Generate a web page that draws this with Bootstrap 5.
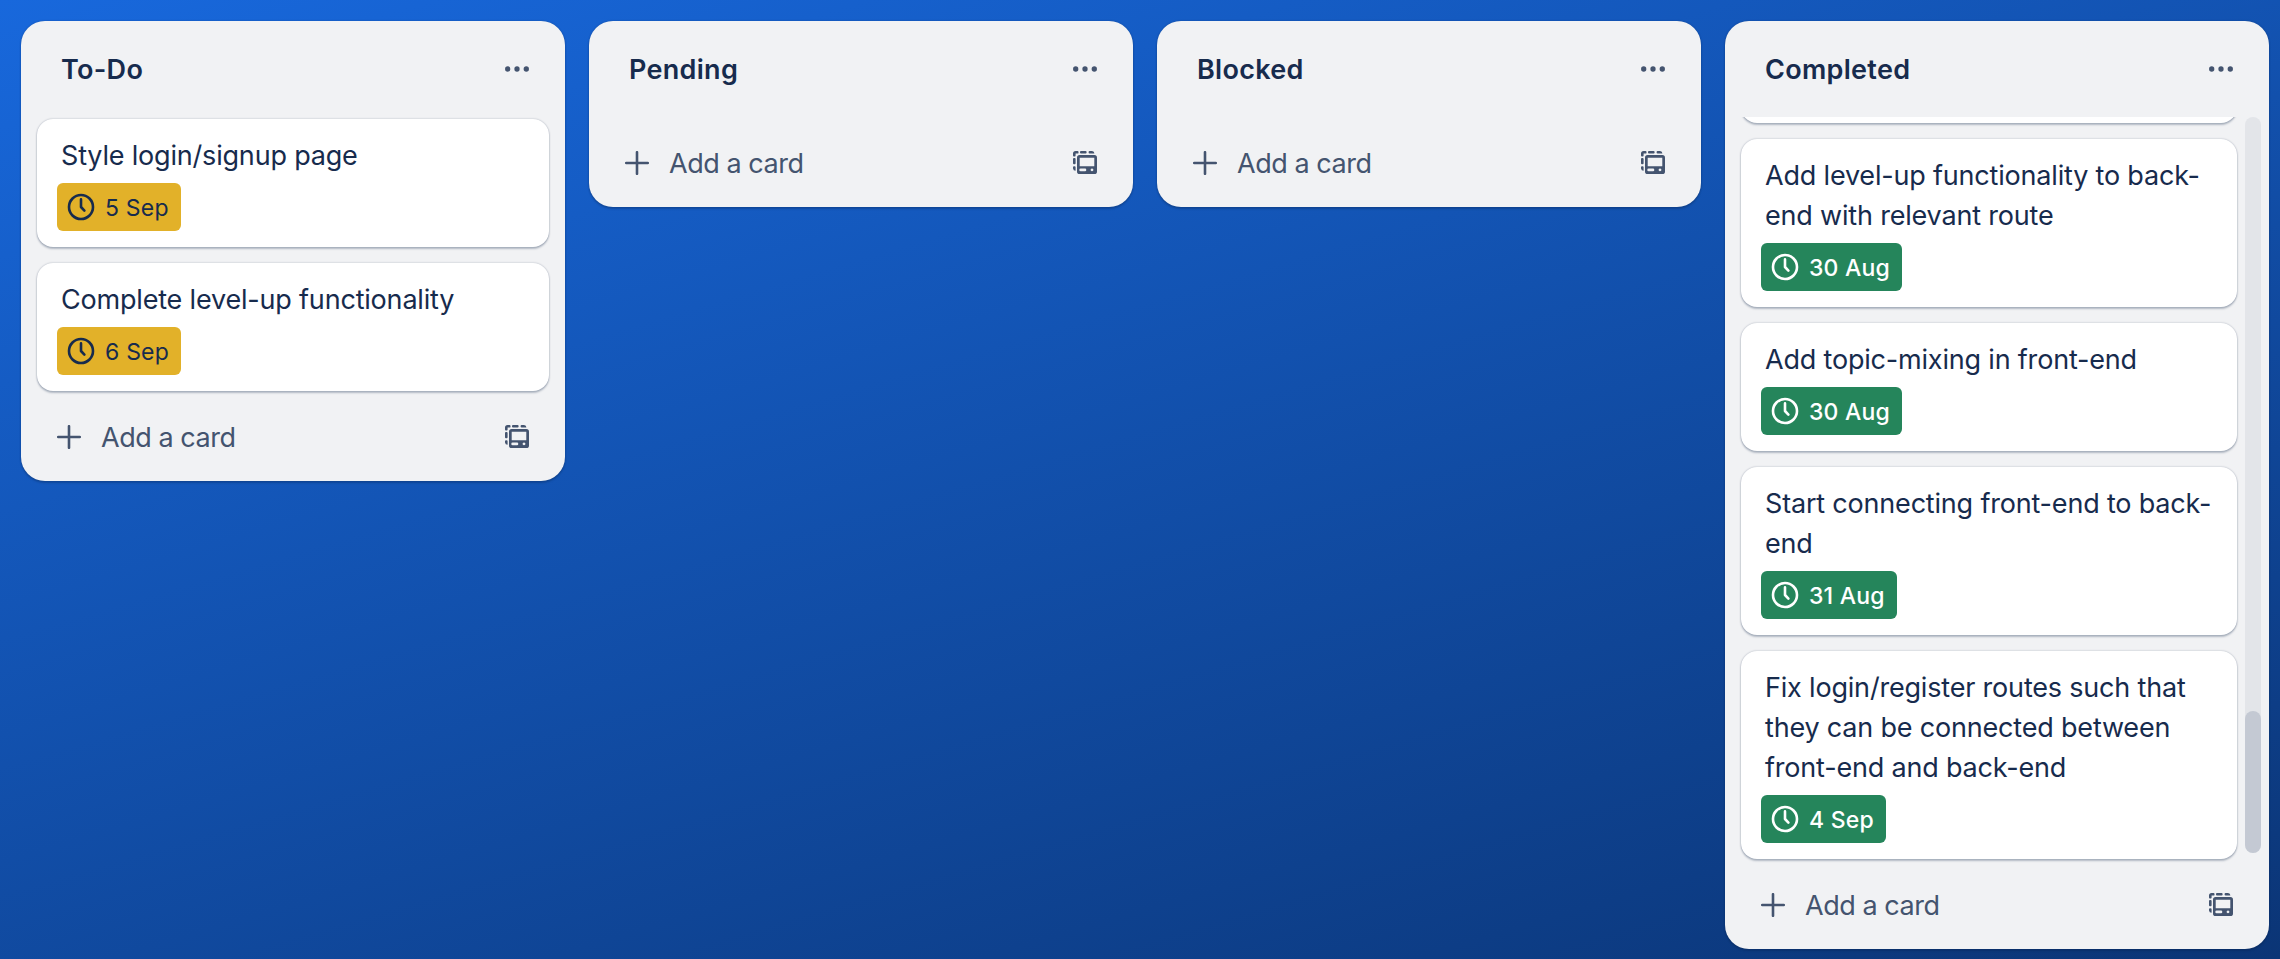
<!DOCTYPE html>
<html lang="en">
<head>
<meta charset="utf-8">
<meta name="viewport" content="width=device-width, initial-scale=1">
<title>Board</title>
<link href="https://cdn.jsdelivr.net/npm/bootstrap@5.3.0/dist/css/bootstrap.min.css" rel="stylesheet">
<style>
  :root { --ink: #172b4d; --subtle: #44546f; --surface: #f1f2f4; }
  body {
    height: 100vh; overflow: hidden; color: var(--ink);
    font-family: Inter, "Liberation Sans", sans-serif; font-size: 27px; line-height: 40px;
    letter-spacing: -.19px;
    background: linear-gradient(163.6deg, #1868dc, #0b3576);
  }
  .board { padding: 21px; gap: 24px; }
  .board-list {
    width: 544px; background: var(--surface); border-radius: 24px;
    box-shadow: 0 2px 2px #091e4240, 0 0 2px #091e424f;
  }
  .list-head { height: 96px; padding: 0 36px 0 40px; }
  .list-head h2 { font-size: 27px; line-height: 40px; font-weight: 600; letter-spacing: .3px; padding-top: 2px; }
  .list-items { padding: 0 16px 8px; gap: 16px; }
  .list-items.has-cards { padding-top: 2px; }
  .scroll-cards { gap: 16px; padding: 0 8px 8px 16px; height: 750px; width: 520px; }
  .task {
    flex: none; background: #fff; border-radius: 16px; padding: 17px 24px 16px;
    box-shadow: 0 2px 2px #091e4240, 0 0 2px #091e424f;
  }
  .due {
    height: 48px; margin: 7px 0 0 -4px; padding: 0 12px 0 10px; gap: 10px;
    border-radius: 6px; font-size: 23px; letter-spacing: .2px; background: #e2b129;
  }
  .due span { padding-top: 1px; }
  .due.done { background: #25855b; color: #fff; font-weight: 500; letter-spacing: .2px; }
  .scroll-track { width: 16px; height: 736px; border-radius: 8px; background: #e3e5e9; }
  .scroll-thumb { height: 142px; border-radius: 8px; background: #c4c9d3; }
  .list-foot { height: 82px; padding: 0 36px 6px; color: var(--subtle); letter-spacing: -.45px; }
  .list-foot .add { gap: 20px; }
  .list-foot .add span { padding-top: 1px; }
  svg { display: block; flex: none; }
</style>
</head>
<body>
<svg width="0" height="0" class="position-absolute" aria-hidden="true">
  <symbol id="dots" viewBox="0 0 24 8"><g fill="#44546f"><circle cx="2.7" cy="4" r="2.65"/><circle cx="12" cy="4" r="2.65"/><circle cx="21.3" cy="4" r="2.65"/></g></symbol>
  <symbol id="plus" viewBox="0 0 24 24"><path d="M12 1.2v21.6M1.2 12h21.6" fill="none" stroke="#44546f" stroke-width="2.6" stroke-linecap="round"/></symbol>
  <symbol id="clock" viewBox="0 0 28 28"><circle cx="14" cy="14" r="12" fill="none" stroke="currentColor" stroke-width="2.6"/><path d="M14 6.4V14l3.4 3.6" fill="none" stroke="currentColor" stroke-width="2.6" stroke-linecap="round" stroke-linejoin="round"/></symbol>
  <symbol id="template" viewBox="0 0 24 24">
    <path fill="#44546f" d="M2.6 0H4.6a.9.9 0 0 1 .9.9v.8a.9.9 0 0 1-.9.9H2.6V4.6a.9.9 0 0 1-.9.9H.9A.9.9 0 0 1 0 4.600V2.600A2.600 2.600 0 0 1 2.600 0zM8 0h4.600a1 1 0 0 1 1 1v.6a1 1 0 0 1-1 1H8a1 1 0 0 1-1-1V1a1 1 0 0 1 1-1zM16.600 0H19a2.600 2.600 0 0 1 2.400 2.600h-4.800a1 1 0 0 1-1-1V1a1 1 0 0 1 1-1zM1 7h.6a1 1 0 0 1 1 1v4.300a1 1 0 0 1-1 1H1a1 1 0 0 1-1-1V8a1 1 0 0 1 1-1zM1 15.300h.6a1 1 0 0 1 1 1v3.400A2.600 2.600 0 0 1 0 17.500v-1.200a1 1 0 0 1 1-1z"/>
    <path fill="#44546f" fill-rule="evenodd" d="M6.600 4.100H21.400A2.600 2.600 0 0 1 24 6.700V20.400A2.600 2.600 0 0 1 21.400 23H6.600A2.600 2.600 0 0 1 4 20.400V6.700A2.600 2.600 0 0 1 6.600 4.100zM6.700 6.700V15.200H21.300V6.700zM7.600 17.600a1.300 1.300 0 0 0 0 2.600H12a1.300 1.300 0 0 0 0-2.600zM19 17.500a1.400 1.400 0 1 0 .01 0z"/>
  </symbol>
</svg>

<main class="board d-flex align-items-start">
  <section class="board-list d-flex flex-column flex-shrink-0">
    <header class="list-head d-flex align-items-center justify-content-between"><h2 class="mb-0">To-Do</h2><svg width="24" height="8"><use href="#dots"/></svg></header>
    <div class="list-items has-cards d-flex flex-column">
      <article class="task"><div>Style login/signup page</div><div class="due d-inline-flex align-items-center align-top"><svg width="28" height="28"><use href="#clock"/></svg><span>5 Sep</span></div></article>
      <article class="task"><div>Complete level-up functionality</div><div class="due d-inline-flex align-items-center align-top"><svg width="28" height="28"><use href="#clock"/></svg><span>6 Sep</span></div></article>
    </div>
    <footer class="list-foot d-flex align-items-center justify-content-between"><div class="add d-flex align-items-center"><svg width="24" height="24"><use href="#plus"/></svg><span>Add a card</span></div><svg width="24" height="24"><use href="#template"/></svg></footer>
  </section>

  <section class="board-list d-flex flex-column flex-shrink-0">
    <header class="list-head d-flex align-items-center justify-content-between"><h2 class="mb-0">Pending</h2><svg width="24" height="8"><use href="#dots"/></svg></header>
    <div class="list-items"></div>
    <footer class="list-foot d-flex align-items-center justify-content-between"><div class="add d-flex align-items-center"><svg width="24" height="24"><use href="#plus"/></svg><span>Add a card</span></div><svg width="24" height="24"><use href="#template"/></svg></footer>
  </section>

  <section class="board-list d-flex flex-column flex-shrink-0">
    <header class="list-head d-flex align-items-center justify-content-between"><h2 class="mb-0">Blocked</h2><svg width="24" height="8"><use href="#dots"/></svg></header>
    <div class="list-items"></div>
    <footer class="list-foot d-flex align-items-center justify-content-between"><div class="add d-flex align-items-center"><svg width="24" height="24"><use href="#plus"/></svg><span>Add a card</span></div><svg width="24" height="24"><use href="#template"/></svg></footer>
  </section>

  <section class="board-list d-flex flex-column flex-shrink-0">
    <header class="list-head d-flex align-items-center justify-content-between"><h2 class="mb-0">Completed</h2><svg width="24" height="8"><use href="#dots"/></svg></header>
    <div class="d-flex">
      <div class="scroll-cards d-flex flex-column justify-content-end overflow-hidden">
        <article class="task" aria-hidden="true"></article>
        <article class="task"><div>Add level-up functionality to back-<br>end with relevant route</div><div class="due done d-inline-flex align-items-center align-top"><svg width="28" height="28"><use href="#clock"/></svg><span>30 Aug</span></div></article>
        <article class="task"><div>Add topic-mixing in front-end</div><div class="due done d-inline-flex align-items-center align-top"><svg width="28" height="28"><use href="#clock"/></svg><span>30 Aug</span></div></article>
        <article class="task"><div>Start connecting front-end to back-<br>end</div><div class="due done d-inline-flex align-items-center align-top"><svg width="28" height="28"><use href="#clock"/></svg><span>31 Aug</span></div></article>
        <article class="task"><div>Fix login/register routes such that<br>they can be connected between<br>front-end and back-end</div><div class="due done d-inline-flex align-items-center align-top"><svg width="28" height="28"><use href="#clock"/></svg><span>4 Sep</span></div></article>
      </div>
      <div class="scroll-track d-flex flex-column justify-content-end"><div class="scroll-thumb"></div></div>
    </div>
    <footer class="list-foot d-flex align-items-center justify-content-between"><div class="add d-flex align-items-center"><svg width="24" height="24"><use href="#plus"/></svg><span>Add a card</span></div><svg width="24" height="24"><use href="#template"/></svg></footer>
  </section>
</main>
<script src="https://cdn.jsdelivr.net/npm/bootstrap@5.3.0/dist/js/bootstrap.bundle.min.js"></script>
</body>
</html>
